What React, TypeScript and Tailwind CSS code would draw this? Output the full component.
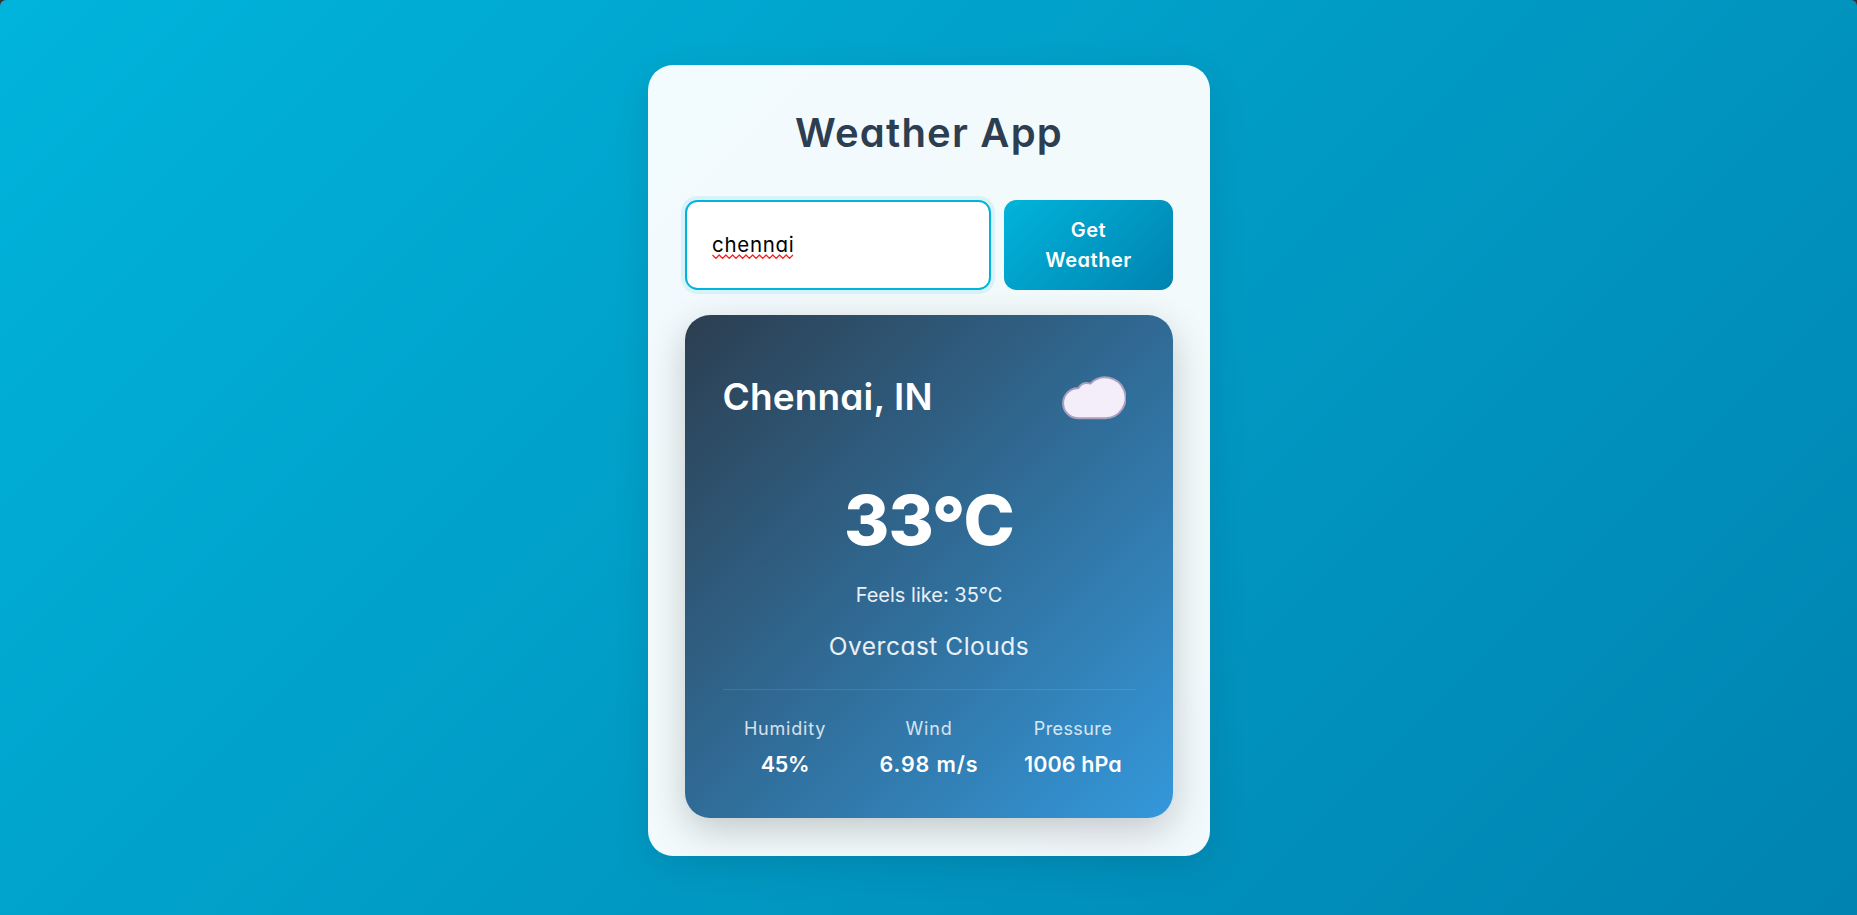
const stats = [
  { label: "Humidity", value: "45%", labelClass: "tracking-[0.8px]", valueClass: "tracking-[-0.2px]" },
  { label: "Wind", value: "6.98 m/s", labelClass: "tracking-[0.8px]", valueClass: "tracking-[0.9px]" },
  { label: "Pressure", value: "1006 hPa", labelClass: "tracking-[0.4px]", valueClass: "tracking-[0.1px]" },
];

const squiggle = "M0.5 1" + Array.from({ length: 12 }, (_, i) => `L${i * 6.7 + 3.85} 4.4L${i * 6.7 + 7.2} 1`).join("");

function CloudIcon() {
  return (
    <svg className="mr-[10px] mt-[2px] h-[44px] w-[65px]" viewBox="1061.5 376 65 44" fill="none">
      <path
        d="M1078 418.2A15 15 0 0 1 1077 388.3Q1078.2 388.3 1079 388Q1083 381.5 1091 383.6A20.4 20.4 0 1 1 1105 418.2Z"
        fill="#f3eef9"
        stroke="#aaa0bb"
        strokeWidth="2"
        strokeLinejoin="round"
      />
    </svg>
  );
}

export default function App() {
  return (
    <div className="h-[915px] bg-[#333333] font-['Inter','Noto_Sans',sans-serif] [font-feature-settings:'cv11']">
      <main className="flex h-full items-start justify-center rounded-t-[6px] bg-[linear-gradient(135deg,#00b4db,#0083b0)] pl-px pt-[65px]">
        <section className="h-[791px] w-[562px] rounded-[25px] bg-white/95 px-[37px] pt-[37px] shadow-[0_10px_38px_rgba(0,0,0,0.1)]">
          <h1 className="h-[98px] text-center text-[40px] font-semibold leading-[61px] tracking-[1.2px] text-[#2c3e50]">
            Weather App
          </h1>
          <form className="flex h-[90px] gap-[13px]">
            <div className="flex w-[306px] items-center rounded-[12.5px] border-2 border-[#00b4db] bg-white px-[25px] text-[20.5px] text-black shadow-[0_0_0_4px_rgba(0,180,219,0.1)]">
              <span className="relative tracking-[0.7px]">
                chennai
                <svg className="absolute bottom-0 left-0 h-[6px] w-[82px]" viewBox="0 0 82 6" fill="none">
                  <path d={squiggle} stroke="#ff1a1a" strokeWidth="1.3" strokeLinejoin="round" />
                </svg>
              </span>
            </div>
            <button
              type="button"
              className="w-[169px] rounded-[12.5px] bg-[linear-gradient(135deg,#00b4db,#0083b0)] px-[30px] text-[20px] font-semibold leading-[30px] tracking-[0.5px] text-white"
            >
              Get Weather
            </button>
          </form>
          <article className="mt-[25px] h-[503px] rounded-[25px] bg-[linear-gradient(135deg,#2c3e50,#3498db)] px-[37.5px] pt-[37px] text-white shadow-[0_12px_38px_rgba(0,0,0,0.2)]">
            <header className="flex h-[90px] items-center justify-between">
              <h2 className="text-[37px] font-semibold tracking-[0.15px]">Chennai, IN</h2>
              <CloudIcon />
            </header>
            <p className="mt-[34px] h-[88px] text-center text-[69px] font-extrabold leading-[88px] tracking-[-0.8px]">
              33
              <span className="relative top-[5px] -mx-[1.5px] text-[74px] font-extrabold leading-[0]">°</span>C
            </p>
            <p className="mt-[16px] text-center text-[20px] leading-[30px] text-white/90">Feels like: 35°C</p>
            <p className="mt-[17px] text-center text-[24.5px] leading-[38px] tracking-[0.5px] text-white/90">
              Overcast Clouds
            </p>
            <div className="mt-[24px] grid grid-cols-3 gap-x-[18.75px] whitespace-nowrap border-t border-white/10 pt-[24px] text-center">
              {stats.map((s) => (
                <div key={s.label}>
                  <p className={`text-[18px] leading-[30px] text-white/80 ${s.labelClass}`}>{s.label}</p>
                  <p className={`mt-[2px] text-[21.5px] font-semibold leading-[36px] ${s.valueClass}`}>{s.value}</p>
                </div>
              ))}
            </div>
          </article>
        </section>
      </main>
    </div>
  );
}
